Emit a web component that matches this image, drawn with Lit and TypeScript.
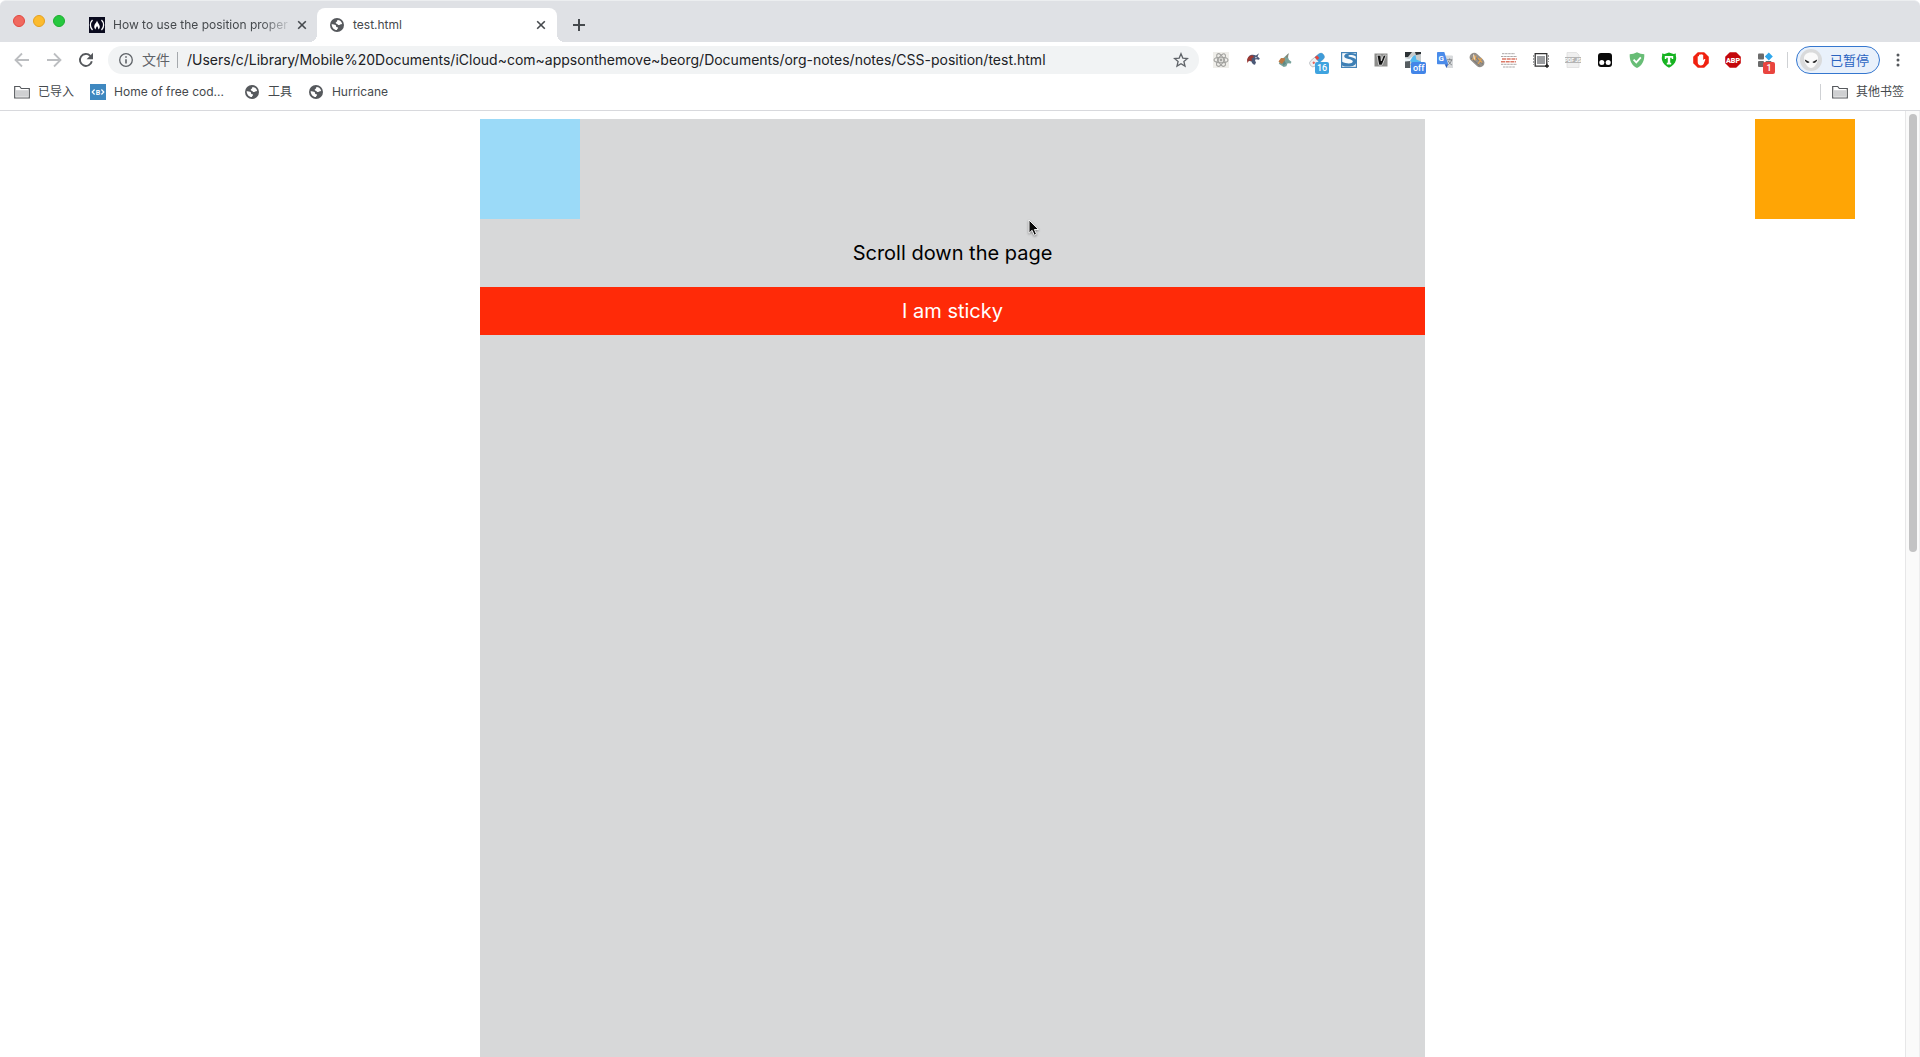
import { LitElement, html, css, svg, TemplateResult } from "lit";
import { customElement, property, state } from "lit/decorators.js";

const globe = html`<svg class="i16" viewBox="0 0 16 16" aria-hidden="true">
  <circle cx="8" cy="8" r="7" fill="#56595d" />
  <path d="M2.600 7.200c1.400.1 3.200.2 4 .8.700.6.100 1.500.900 1.900.700.3 1.500.1 1.600.8.100.9-1 1-1.200 2.300-2.900.1-5-2.400-5.300-5.800z" fill="#fff" />
  <path d="M8.600 3.100c2.200.1 4 1.600 4.500 3.700-.8.900-1.700.3-2.300.9-.6.500-1.700.5-2.100-.2-.3-.7-1.700-.6-2-1.400-.2-.9.900-.9 1.300-1.500.3-.5.100-1.100.6-1.500z" fill="#fff" />
</svg>`;

const folder = html`<svg class="i16" viewBox="0 0 16 16" aria-hidden="true">
  <path d="M.7 14V2.500h5l1.600 2h8V14z" fill="#fff" stroke="#56595d" stroke-width="1.200" />
  <path d="M2 6.200h12v6.500H2z" fill="#cfd0d2" />
</svg>`;

const cross = html`<svg class="i10" viewBox="0 0 10 10" aria-hidden="true">
  <path d="M1.200 1.200l7.600 7.600M8.800 1.200L1.200 8.800" stroke="#45494d" stroke-width="1.600" />
</svg>`;

interface Extension {
  name: string;
  art: TemplateResult;
  badge?: string;
  tone?: string;
}

const extensions: Extension[] = [
  {
    name: "React tools",
    art: svg`<rect width="16" height="16" fill="#efeeea"/><g fill="none" stroke="#a3a3a0" stroke-width="1.100"><ellipse cx="8" cy="8" rx="7" ry="2.800"/><ellipse cx="8" cy="8" rx="7" ry="2.800" transform="rotate(60 8 8)"/><ellipse cx="8" cy="8" rx="7" ry="2.800" transform="rotate(120 8 8)"/></g><circle cx="8" cy="8" r="1.400" fill="#a3a3a0"/>`,
  },
  {
    name: "Unicorn",
    art: svg`<path d="M4 4c2-1.600 5-1.800 7-.4L14 1.200l-1.500 3.200L14.800 6.500l-.8 1.300-3.200-.6c-1 .6-1 1.800.2 3l-1 2.600c-2-.2-3-1.400-3.600-3.400L2 8.600z" fill="#4b5876"/><path d="M2.200 8.800C2 5.800 4 3.600 7.500 3.200L9 5 6.500 6.400l.6 2-1.600.4-1-.6L2.200 11z" fill="#9d3730"/><path d="M10 4.800l2.400 1-1.800.6z" fill="#d6dbe4"/>`,
  },
  {
    name: "Unicorn assets",
    art: svg`<path d="M11.500 1.200l-.4 4.300.8 2.300 2.500 2-.5 1.800-3.300-.3-1.200 2.900-2.600.8-5-3.200 1.500-3.500L7 5.500z" fill="#79a39b"/><path d="M1.500 9.500L4 6l4 .2-.5 4-3 1.800z" fill="#bd7843"/><path d="M11.800 1L8.500 5l1.800 1z" fill="#8d8372"/><path d="M7.500 8.500l1.500 3-2.500 2.300-1-2z" fill="#5f8984"/>`,
  },
  {
    name: "Capsule",
    badge: "16",
    tone: "sky",
    art: svg`<g transform="rotate(-40 8 8)"><rect x="-.5" y="4.500" width="17" height="7" rx="3.500" fill="#eef0f2" stroke="#b9bdc2" stroke-width=".8"/><path d="M8 4.500h5a3.500 3.500 0 0 1 0 7H8z" fill="#3f9bd8"/><path d="M8 4.500h3v3.500H8z" fill="#e6473c"/><circle cx="3.800" cy="8" r="1.200" fill="#e6675e"/></g>`,
  },
  {
    name: "Stylus",
    art: svg`<rect x=".6" y=".6" width="14.800" height="14.800" fill="#f7fafc" stroke="#4584b8" stroke-width="1.200"/><path d="M15 2.200C10-.2 3.500 1 3.200 4.200c-.2 3 8.800 2.600 8.600 5.300C11.600 12 5.500 12 1 9.800v3.600c5 2.200 14.300 1.700 14.500-4.200C15.600 4.800 7.300 5.500 7.400 4c.1-1.400 4-1.500 7.600.5z" fill="#3d7fb5"/>`,
  },
  {
    name: "Vimium",
    art: svg`<rect x="1.500" y="1.500" width="13" height="13" fill="#8d8d8b"/><path d="M4 3.200h3.800l.5 5.600 2.200-5.600h2.700L9 13.200H5.800z" fill="#111" stroke="#eee" stroke-width=".8"/>`,
  },
  {
    name: "Proxy",
    badge: "off",
    tone: "blue",
    art: svg`<rect width="16" height="16" fill="#c8cccd"/><path d="M0 0h7L3 5H0zM10 0h6v2l-5 1z" fill="#2c3235"/><path d="M0 9h5v7H0z" fill="#565d61"/><path d="M0 7.500C5 8.500 7 4.500 10.500 3l.8 4.500 4.700 2V13H5c2-2 2-3 0-4z" fill="#50b7ef"/><path d="M0 6l4 1 4-3-3 5-5 .5z" fill="#eef6fa"/>`,
  },
  {
    name: "Google Translate",
    art: svg`<path d="M6 3.500h9.200l.8.8V16H9.500z" fill="#d8dadc"/><path d="M0 .8Q0 0 .8 0h6.500l3.900 12.300H.8q-.8 0-.8-.8z" fill="#4a8bea"/><path d="M7.700 12.300h3.500L9.500 16z" fill="#2f62be"/><text x="1.500" y="9.200" font-family="Roboto, sans-serif" font-weight="700" font-size="8" fill="#fff">G</text><path d="M10 7.800h5.300M12.600 6.500v1.300M14.500 8c-.6 2.200-1.800 3.800-3.200 4.600M11.400 9c.6 1.600 1.800 3 3.400 3.900" stroke="#75797d" fill="none" stroke-width=".9"/>`,
  },
  {
    name: "Notes",
    art: svg`<g transform="rotate(43 8 8)"><rect x="-.5" y="3.500" width="17" height="9" rx="4.500" fill="#94908b"/><path d="M1 7h14M2 10.500h12" stroke="#6e6a66" stroke-width=".8"/></g><path d="M3.500 8l1.800-4 1.800 4M7 3.500l-1 5M9 6l4 4.500M12.700 6L9 12" stroke="#dfa254" fill="none" stroke-width="1.200"/><path d="M4.500 2.500l1 5" stroke="#f0e9df"/>`,
  },
  {
    name: "Text lines",
    art: svg`<path d="M1 1.700h13M0 4.500h16M0 12.300h16M2 15h12" stroke="#aaa7a7" stroke-dasharray="2.500 .6"/><path d="M1 7h15M0 9.700h15" stroke="#dc7a68" stroke-width="1.400" stroke-dasharray="4 .7"/>`,
  },
  {
    name: "Capture area",
    art: svg`<rect x="4" y="4" width="8" height="8" fill="#9b9da0"/><path d="M2.200 1.700h11.600v12.400H2.200z" fill="none" stroke="#333" stroke-width="1.300"/><path d="M.6 3v10M15.500 3v7" stroke="#777" stroke-width=".8" stroke-dasharray="2 1"/><path d="M14 11.800V16M12 14h4" stroke="#222" stroke-width="1.300"/>`,
  },
  {
    name: "PDF viewer",
    art: svg`<path d="M2 .5h9.500L14 3v12.500H2z" fill="#efefef" stroke="#ddd" stroke-width=".8"/><rect x="0" y="5" width="16" height="6" fill="#b5b5b5"/><text x="8" y="9.800" text-anchor="middle" font-family="Roboto, sans-serif" font-weight="700" font-size="5" fill="#fff">PDF JS</text>`,
  },
  {
    name: "Tampermonkey",
    art: svg`<rect x="1" y="1" width="14" height="14" rx="3" fill="#090909"/><circle cx="4.800" cy="10.600" r="2.500" fill="#fff"/><circle cx="11.200" cy="10.600" r="2.500" fill="#fff"/>`,
  },
  {
    name: "Safety shield",
    art: svg`<path d="M8 .3c2.300 1.400 4.800 1.800 7.300 1.900C15.600 8.700 13.300 13.200 8 16 2.700 13.200.4 8.700.7 2.200 3.200 2.100 5.700 1.700 8 .3z" fill="#68bd76"/><path d="M4.600 7.600l2.700 2.800 4.500-5" fill="none" stroke="#fff" stroke-width="1.800"/>`,
  },
  {
    name: "Traffic shield",
    art: svg`<path d="M1 1.500l2.500.5L8 .6l4.500 1.400 2.500-.5c-.8 2 .8 3.500 0 6.500-.9 3.500-3.500 6-7 7.700C4.500 14 1.900 11.500 1 8c-.8-3 .8-4.500 0-6.500z" fill="#16b321"/><path d="M3.800 4h8.400v3h-1.500V5.800H9.200v5h1v1.600H5.800v-1.600h1v-5H5.300V7H3.800z" fill="#fff"/>`,
  },
  {
    name: "AdBlock",
    art: svg`<path d="M4.800.2h6.400l4.600 4.600v6.400l-4.600 4.600H4.800L.2 11.200V4.800z" fill="#f0210f"/><path d="M4.700 8.200V4.400q.7-.8 1.300 0V3q.7-.8 1.400 0v-.6q.7-.8 1.400 0V3q.8-.8 1.400 0v5l1.200-1q.8-.3 1 .5L10.600 12q-.7 1.400-2.600 1.400-3.300 0-3.300-3.400z" fill="#fff"/>`,
  },
  {
    name: "Adblock Plus",
    art: svg`<path d="M4.800.2h6.400l4.600 4.600v6.400l-4.600 4.600H4.800L.2 11.200V4.800z" fill="#c4070b"/><text x="8" y="10.600" text-anchor="middle" font-family="Roboto, sans-serif" font-weight="900" font-size="7.200" fill="#fff">ABP</text>`,
  },
  {
    name: "Extension manager",
    badge: "1",
    tone: "red",
    art: svg`<g fill="#6b6b6b"><rect x="1" y="1.500" width="6" height="6" rx="1"/><rect x="1" y="9" width="6" height="6" rx="1"/><rect x="8.500" y="9" width="6" height="6" rx="1"/></g><path d="M11.800.5l4 3.900-4 4-4-4z" fill="#2fa7ec"/>`,
  },
];

@customElement("browser-tabs")
class BrowserTabs extends LitElement {
  static styles = css`
    :host {
      display: flex;
      height: 42px;
      box-sizing: border-box;
      border-top: 1px solid #eceef0;
      background: #dfe1e5;
      border-radius: 6px 6px 0 0;
      font: 12px/16px Inter, "Noto Sans CJK SC", sans-serif;
      color: #45494d;
    }
    button {
      display: flex;
      align-items: center;
      justify-content: center;
      border: 0;
      padding: 0;
      background: none;
      font: inherit;
      color: inherit;
    }
    .lights {
      display: flex;
      gap: 8px;
      padding: 14px 12px 0 13px;
    }
    .light {
      width: 12px;
      height: 12px;
      box-sizing: border-box;
      border-radius: 50%;
    }
    .close { background: #f0695f; border: 1px solid #e2463f; }
    .min { background: #fcbb2e; border: 1px solid #e4a01f; }
    .max { background: #26c83f; border: 1px solid #1dae2f; }
    .tab {
      display: flex;
      align-items: center;
      width: 240px;
      height: 34px;
      margin-top: 7px;
      padding: 0 10px 0 12px;
      box-sizing: border-box;
      position: relative;
    }
    .tab.first { padding-right: 9px; }
    .pick {
      flex: 1;
      min-width: 0;
      justify-content: flex-start;
      gap: 8px;
      height: 34px;
    }
    .title {
      flex: 1;
      text-align: left;
      white-space: nowrap;
    }
    .first .title {
      -webkit-mask-image: linear-gradient(90deg, #000 148px, #0003 174px);
      mask-image: linear-gradient(90deg, #000 148px, #0003 174px);
    }
    .active {
      background: #fff;
      border-radius: 8px 8px 0 0;
    }
    .active::before,
    .active::after {
      content: "";
      position: absolute;
      bottom: 0;
      width: 8px;
      height: 8px;
    }
    .active::before {
      right: 100%;
      background: radial-gradient(circle at 0 0, transparent 8px, #fff 8px);
    }
    .active::after {
      left: 100%;
      background: radial-gradient(circle at 100% 0, transparent 8px, #fff 8px);
    }
    .x { width: 12px; height: 16px; }
    .add { width: 28px; height: 28px; margin: 10px 0 0 8px; }
    .i16 { width: 16px; height: 16px; flex: none; }
    .i10 { width: 10px; height: 10px; }
    .i12 { width: 12px; height: 12px; }
  `;

  @state() tabs = ["How to use the position proper", "test.html"];

  render() {
    return html`
      <div class="lights">
        <button class="light close" aria-label="Close window"></button>
        <button class="light min" aria-label="Minimise window"></button>
        <button class="light max" aria-label="Zoom window"></button>
      </div>
      <div class="tab first">
        <button class="pick">
          <svg class="i16" viewBox="0 0 16 16" aria-hidden="true">
            <rect width="16" height="16" fill="#0a0a1e" />
            <path d="M3.500 3C.7 5.700.7 10.300 3.500 13M12.500 3c2.800 2.700 2.800 7.300 0 10" fill="none" stroke="#fff" stroke-width="1.300" />
            <path d="M8 3.500c-.2 2-2.800 3.400-2.800 5.900 0 1.500.8 2.600 1.800 3.100-.8-1.700.6-2.200 1-3.600.6 1.200 1.800 2 1 3.600 1.200-.5 1.900-1.500 1.800-3C10.700 7.200 8.300 5.800 8 3.500z" fill="#fff" />
          </svg>
          <span class="title">${this.tabs[0]}</span>
        </button>
        <button class="x" aria-label="Close tab">${cross}</button>
      </div>
      <div class="tab active">
        <button class="pick">${globe}<span class="title">${this.tabs[1]}</span></button>
        <button class="x" aria-label="Close tab">${cross}</button>
      </div>
      <button class="add" aria-label="New tab">
        <svg class="i12" viewBox="0 0 12 12" aria-hidden="true"><path d="M6 0v12M0 6h12" stroke="#45494d" stroke-width="2" /></svg>
      </button>
    `;
  }
}

@customElement("extension-icon")
class ExtensionIcon extends LitElement {
  static styles = css`
    :host { display: block; }
    button {
      display: block;
      position: relative;
      width: 16px;
      height: 16px;
      border: 0;
      padding: 0;
      background: none;
    }
    svg { display: block; width: 16px; height: 16px; }
    .badge {
      position: absolute;
      left: 6px;
      top: 10px;
      min-width: 12px;
      padding: 0 2px;
      box-sizing: border-box;
      border-radius: 2px;
      color: #fff;
      font: 500 9px/12px Roboto, sans-serif;
      text-align: center;
    }
    .sky { background: #3fa3df; }
    .blue { background: #4285e8; }
    .red { background: #e9453f; }
  `;

  @property({ attribute: false }) item!: Extension;

  render() {
    const { name, art, badge, tone } = this.item;
    return html`<button aria-label=${name}>
      <svg viewBox="0 0 16 16" aria-hidden="true">${art}</svg>
      ${badge ? html`<span class="badge ${tone}">${badge}</span>` : ""}
    </button>`;
  }
}

@customElement("browser-toolbar")
class BrowserToolbar extends LitElement {
  static styles = css`
    :host {
      display: flex;
      align-items: center;
      height: 36px;
      padding: 0 14px;
      background: #fff;
      font: 14px/20px Inter, "Noto Sans CJK SC", sans-serif;
      color: #5f6368;
    }
    button {
      display: flex;
      align-items: center;
      border: 0;
      padding: 0;
      background: none;
      font: inherit;
      color: inherit;
    }
    svg { display: block; flex: none; width: 16px; height: 16px; }
    .nav { display: flex; gap: 16px; }
    .address {
      display: flex;
      align-items: center;
      flex: 1;
      min-width: 0;
      height: 28px;
      margin-left: 14px;
      padding: 0 10px;
      box-sizing: border-box;
      border-radius: 14px;
      background: #f1f3f4;
    }
    .scheme { padding: 0 7px 0 8px; white-space: nowrap; }
    .bar { width: 1px; height: 16px; background: #a5a9ad; }
    input {
      flex: 1;
      min-width: 0;
      border: 0;
      padding: 0 9px;
      background: none;
      font: inherit;
      color: #202124;
      outline: 0;
    }
    .extensions { display: flex; gap: 16px; padding: 0 14px; }
    .sep { width: 1px; height: 16px; background: #cfd1d4; }
    .profile {
      gap: 8px;
      height: 28px;
      margin: 0 10px 0 8px;
      padding: 0 10px 0 3px;
      box-sizing: border-box;
      border: 1px solid #3577cf;
      border-radius: 14px;
      background: #e9f1fb;
      color: #2a63c0;
      font-size: 13px;
      white-space: nowrap;
    }
    .profile svg { width: 22px; height: 22px; }
  `;

  render() {
    return html`
      <div class="nav">
        <button aria-label="Back"><svg viewBox="0 0 16 16"><path d="M15 8H2M8 1.500L1.500 8 8 14.500" fill="none" stroke="#bcbec1" stroke-width="1.800" /></svg></button>
        <button aria-label="Forward"><svg viewBox="0 0 16 16"><path d="M1 8h13M8 1.500L14.500 8 8 14.500" fill="none" stroke="#bcbec1" stroke-width="1.800" /></svg></button>
        <button aria-label="Reload"><svg viewBox="0 0 16 16"><path d="M13.800 9.200A6 6 0 1 1 12.300 3.800L14 5.500" fill="none" stroke="#55585c" stroke-width="1.900" /><path d="M15 .8v6.400H8.600z" fill="#55585c" /></svg></button>
      </div>
      <div class="address">
        <svg viewBox="0 0 16 16" aria-hidden="true"><circle cx="8" cy="8" r="6.300" fill="none" stroke="#5f6368" stroke-width="1.300" /><path d="M8 7.200v4.300M8 4.300v1.500" stroke="#5f6368" stroke-width="1.600" /></svg>
        <label class="scheme" for="url">文件</label>
        <span class="bar"></span>
        <input id="url" type="text" spellcheck="false" .value=${"/Users/c/Library/Mobile%20Documents/iCloud~com~appsonthemove~beorg/Documents/org-notes/notes/CSS-position/test.html"} />
        <button aria-label="Bookmark this page"><svg viewBox="0 0 16 16"><path d="M8 1.800l1.800 4.300 4.700.4-3.600 3 1.100 4.600L8 11.700l-4 2.400 1.100-4.600-3.600-3 4.700-.4z" fill="none" stroke="#5f6368" stroke-width="1.300" /></svg></button>
      </div>
      <div class="extensions">
        ${extensions.map((item) => html`<extension-icon .item=${item}></extension-icon>`)}
      </div>
      <span class="sep"></span>
      <button class="profile">
        <svg viewBox="0 0 22 22" aria-hidden="true">
          <circle cx="11" cy="11" r="11" fill="#d9dadb" />
          <path d="M11 3.500c4.600 0 7.300 2.500 7 6.500-.3 4-3.800 9-7 9s-6.700-5-7-9c-.3-4 2.400-6.500 7-6.500z" fill="#fafafa" />
          <path d="M4.800 10.500l4.800 2.600c-.6 1.500-4.500 1-4.800-2.600zM17.200 10.500l-4.800 2.600c.6 1.500 4.500 1 4.800-2.600z" fill="#222" />
        </svg>
        已暂停
      </button>
      <button aria-label="Menu"><svg viewBox="0 0 16 16"><g fill="#55585c"><circle cx="8" cy="3" r="1.500" /><circle cx="8" cy="8" r="1.500" /><circle cx="8" cy="13" r="1.500" /></g></svg></button>
    `;
  }
}

@customElement("bookmark-bar")
class BookmarkBar extends LitElement {
  static styles = css`
    :host {
      display: flex;
      align-items: center;
      height: 28px;
      padding: 0 16px 4px 14px;
      border-bottom: 1px solid #d8d9dd;
      background: #fff;
      font: 12px/16px Inter, "Noto Sans CJK SC", sans-serif;
    }
    a {
      display: flex;
      align-items: center;
      gap: 8px;
      margin-right: 16px;
      color: #45494d;
      text-decoration: none;
      white-space: nowrap;
    }
    .wide { margin-right: 20px; }
    .other {
      margin: 0 0 0 auto;
      padding-left: 11px;
      border-left: 1px solid #cfd1d4;
    }
    .i16 { width: 16px; height: 16px; }
  `;

  render() {
    return html`
      <a href="#imported">${folder}已导入</a>
      <a class="wide" href="#ebooks">
        <svg class="i16" viewBox="0 0 16 16" aria-hidden="true">
          <rect width="16" height="16" fill="#3f88c0" />
          <path d="M4.600 5.500L2.200 8l2.400 2.500M11.400 5.500L13.800 8l-2.400 2.500" fill="none" stroke="#fff" stroke-width="1.200" />
          <text x="8" y="10.600" text-anchor="middle" font-family="Roboto, sans-serif" font-weight="700" font-size="7" fill="#fff">B</text>
        </svg>
        Home of free cod...
      </a>
      <a href="#tools">${globe}工具</a>
      <a href="#hurricane">${globe}Hurricane</a>
      <a class="other" href="#other">${folder}其他书签</a>
    `;
  }
}

@customElement("position-demo")
class PositionDemo extends LitElement {
  static styles = css`
    :host {
      display: flex;
      background: #fff;
      position: relative;
      font: 20px/24px Inter, sans-serif;
    }
    .page {
      flex: 1;
      display: grid;
      grid-template-columns: 1fr 50% 1fr;
      padding: 8px 8px 0;
    }
    .box { width: 100px; height: 100px; }
    .column {
      grid-column: 2;
      background: #d7d8d9;
      text-align: center;
    }
    .blue { background: #9bdaf8; }
    .orange {
      grid-column: 3;
      justify-self: end;
      margin-right: 42px;
      background: #ffa505;
    }
    p { margin: 0; padding: 22px 0; color: #000; }
    .sticky {
      position: sticky;
      top: 0;
      padding: 12px 0;
      background: #ff2a08;
      color: #fff;
    }
    .track {
      width: 15px;
      box-sizing: border-box;
      padding: 3px 2px 0 3px;
      border-left: 1px solid #e7e7e8;
      border-right: 1px solid #ededee;
      background: #fafafa;
    }
    .thumb {
      width: 8px;
      height: 46.4%;
      border-radius: 4px;
      background: #c3c3c4;
    }
    .cursor {
      position: absolute;
      left: 1027px;
      top: 108px;
      width: 14px;
      height: 18px;
      filter: drop-shadow(0 1px 1px #0006);
    }
  `;

  render() {
    return html`
      <main class="page">
        <section class="column">
          <div class="box blue"></div>
          <p>Scroll down the page</p>
          <div class="sticky">I am sticky</div>
        </section>
        <div class="box orange"></div>
      </main>
      <div class="track"><div class="thumb"></div></div>
      <svg class="cursor" viewBox="0 0 14 18" aria-hidden="true">
        <path d="M2 1v13.200l3.100-2.900 2.100 4.900 2.300-1-2.100-4.700h4.200z" fill="#0b0b0b" stroke="#f4f4f4" stroke-width="1" />
      </svg>
    `;
  }
}

@customElement("app-root")
class AppRoot extends LitElement {
  static styles = css`
    :host {
      display: flex;
      flex-direction: column;
      min-height: 100vh;
      background: #fff;
    }
    position-demo { flex: 1; }
  `;

  render() {
    return html`
      <browser-tabs></browser-tabs>
      <browser-toolbar></browser-toolbar>
      <bookmark-bar></bookmark-bar>
      <position-demo></position-demo>
    `;
  }
}
